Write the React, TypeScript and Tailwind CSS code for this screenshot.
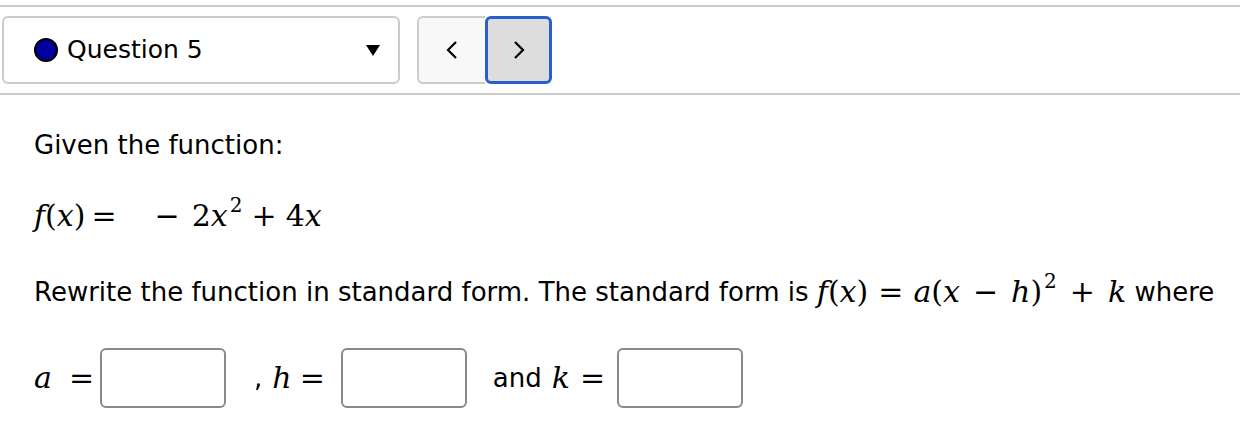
import React from 'react';

const sans = { fontFamily: '"DejaVu Sans", Verdana, sans-serif' };

function V({ children }: { children: React.ReactNode }) {
  return <span className="italic">{children}</span>;
}

function Math({ children, className = '' }: { children: React.ReactNode; className?: string }) {
  return (
    <span className={`font-['DejaVu_Serif',serif] text-[30px] leading-none whitespace-nowrap inline-flex items-baseline ${className}`}>
      {children}
    </span>
  );
}

function Sq() {
  return <span className="text-[20px] relative -top-[14px] ml-[2px]">2</span>;
}

function AnswerBox() {
  return <input className="w-[126px] h-[60px] rounded-[6px] border-2 border-[#8a8a8a] bg-white outline-none" />;
}

export default function App() {
  return (
    <div className="w-[1242px] h-[438px] bg-white text-black overflow-hidden" style={sans}>
      {/* Toolbar */}
      <div className="pt-[5px]">
        <div className="w-[1240px] h-[2px] bg-[#cccccc]" />
        <div className="flex items-center pl-[2px] pt-[9px] pb-[9px]">
          <div className="w-[398px] h-[68px] rounded-[6px] border-2 border-[#cccccc] flex items-center pl-[30px] pr-[18px]">
            <span className="w-[24px] h-[24px] rounded-full bg-[#0000a0] border-2 border-black shrink-0" />
            <span className="ml-[9px] text-[25px]">Question 5</span>
            <svg className="ml-auto" width="14" height="11" viewBox="0 0 14 11">
              <polygon points="0,0 14,0 7,11" fill="#000" />
            </svg>
          </div>
          <div className="flex ml-[17px]">
            <button className="w-[68px] h-[68px] rounded-l-[6px] border-2 border-r-0 border-[#cccccc] bg-[#f8f8f8] flex items-center justify-center">
              <svg width="12" height="18" viewBox="0 0 12 18">
                <polyline points="10,1 2,9 10,17" fill="none" stroke="#000" strokeWidth="2.2" />
              </svg>
            </button>
            <button className="w-[67px] h-[68px] rounded-[6px] border-[3px] border-[#2a5fc8] bg-[#dddddd] flex items-center justify-center">
              <svg width="12" height="18" viewBox="0 0 12 18">
                <polyline points="2,1 10,9 2,17" fill="none" stroke="#000" strokeWidth="2.2" />
              </svg>
            </button>
          </div>
        </div>
        <div className="w-[1240px] h-[2px] bg-[#cccccc]" />
      </div>

      {/* Question body */}
      <div className="pl-[34px]">
        <p className="mt-[35px] text-[26px] leading-[30px]">Given the function:</p>

        <div className="mt-[38px] h-[36px] flex items-center">
          <Math>
            <V>f</V>(<V>x</V>)<span className="ml-[6px] mr-[38px]">=</span>
            <span className="mr-[12px]">−</span>2<V>x</V>
            <Sq />
            <span className="mx-[9px]">+</span>4<V>x</V>
          </Math>
        </div>

        <div className="mt-[40px] h-[36px] flex items-center text-[26px] whitespace-nowrap">
          <span>Rewrite the function in standard form. The standard form is&nbsp;</span>
          <Math>
            <V>f</V>(<V>x</V>)<span className="mx-[10px]">=</span>
            <V>a</V>(<V>x</V>
            <span className="mx-[13px]">−</span>
            <V>h</V>)<Sq />
            <span className="mx-[13px]">+</span>
            <V>k</V>
          </Math>
          <span>&nbsp;where</span>
        </div>

        <div className="mt-[38px] flex items-center text-[26px]">
          <Math>
            <V>a</V>
            <span className="ml-[17px] mr-[6px]">=</span>
          </Math>
          <AnswerBox />
          <span className="ml-[28px]">,</span>
          <Math className="ml-[10px]">
            <V>h</V>
            <span className="ml-[8px] mr-[16px]">=</span>
          </Math>
          <AnswerBox />
          <span className="ml-[26px]">and</span>
          <Math className="ml-[10px]">
            <V>k</V>
            <span className="ml-[10px] mr-[12px]">=</span>
          </Math>
          <AnswerBox />
        </div>
      </div>
    </div>
  );
}
